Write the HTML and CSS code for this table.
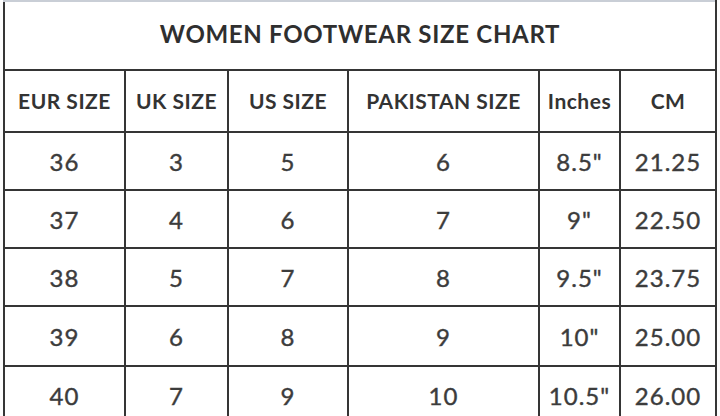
FILE: index.html
```html
<!DOCTYPE html>
<html>
<head>
<meta charset="utf-8">
<link rel="stylesheet" href="styles.css">
</head>
<body>
<table class="chart">
  <colgroup>
    <col class="c1"><col class="c2"><col class="c3"><col class="c4"><col class="c5"><col class="c6">
  </colgroup>
  <tr class="title-row"><th colspan="6" class="title">WOMEN FOOTWEAR SIZE CHART</th></tr>
  <tr class="head-row">
    <th>EUR SIZE</th><th>UK SIZE</th><th>US SIZE</th><th>PAKISTAN SIZE</th><th>Inches</th><th>CM</th>
  </tr>
  <tr><td>36</td><td>3</td><td>5</td><td>6</td><td>8.5"</td><td>21.25</td></tr>
  <tr><td>37</td><td>4</td><td>6</td><td>7</td><td>9"</td><td>22.50</td></tr>
  <tr><td>38</td><td>5</td><td>7</td><td>8</td><td>9.5"</td><td>23.75</td></tr>
  <tr class="r4"><td>39</td><td>6</td><td>8</td><td>9</td><td>10"</td><td>25.00</td></tr>
  <tr><td>40</td><td>7</td><td>9</td><td>10</td><td>10.5"</td><td>26.00</td></tr>
</table>
</body>
</html>
```
FILE: styles.css
```css
html, body {
  margin: 0;
  padding: 0;
  background: #fdfdfd;
  overflow: hidden;
}
.chart {
  margin-left: 3px;
  margin-top: 0;
  width: 712px;
  table-layout: fixed;
  border-collapse: collapse;
  font-family: Lato, "Open Sans", sans-serif;
  color: #3a3a3a;
  background: #fff;
}
.c1 { width: 121px; }
.c2 { width: 103px; }
.c3 { width: 120px; }
.c4 { width: 191px; }
.c5 { width: 81px; }
.c6 { width: 96px; }
.chart th, .chart td {
  border: 2px solid #353535;
  text-align: center;
  padding: 0;
}
.chart .title {
  border-top: 2px solid #c9ced6;
  height: 62px;
  padding-bottom: 5px;
  font-size: 24px;
  font-weight: 700;
  letter-spacing: 0.7px;
  color: #2f2f2f;
}
.head-row th {
  height: 59px;
  padding-bottom: 1px;
  font-size: 21px;
  font-weight: 700;
  letter-spacing: 0.5px;
  color: #333;
}
.chart td {
  height: 56px;
  font-size: 24px;
  font-weight: 400;
  letter-spacing: 1px;
  color: #3c3c3c;
  -webkit-text-stroke: 0.4px #3c3c3c;
}
.r4 td { height: 58px; }
```
